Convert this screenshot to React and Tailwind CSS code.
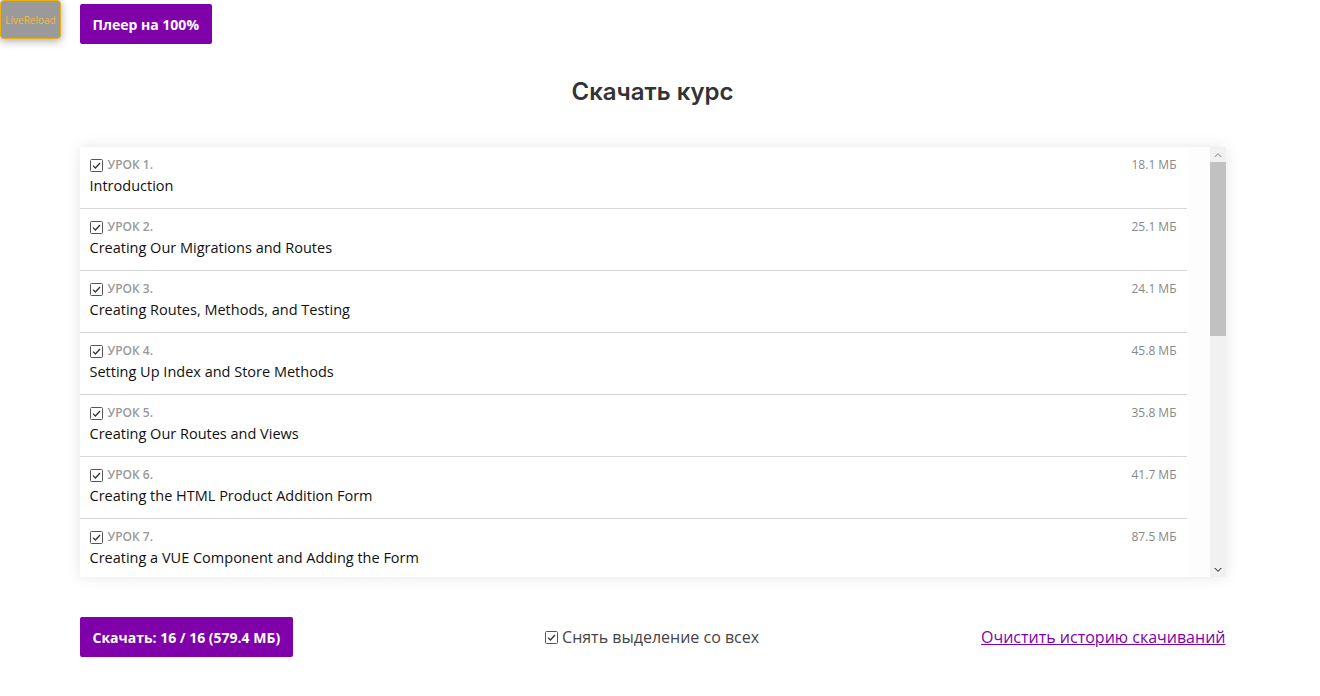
import React from "react";

const lessons = [
  ["Introduction", "18.1 МБ"],
  ["Creating Our Migrations and Routes", "25.1 МБ"],
  ["Creating Routes, Methods, and Testing", "24.1 МБ"],
  ["Setting Up Index and Store Methods", "45.8 МБ"],
  ["Creating Our Routes and Views", "35.8 МБ"],
  ["Creating the HTML Product Addition Form", "41.7 МБ"],
  ["Creating a VUE Component and Adding the Form", "87.5 МБ"],
];

function Check({ className = "" }) {
  return (
    <svg width="13" height="13" viewBox="0 0 13 13" className={className}>
      <rect x="0.5" y="0.5" width="12" height="12" rx="1" fill="white" stroke="#555" strokeWidth="1" />
      <path d="M3 6.6 L5.4 9 L10 4" fill="none" stroke="#333" strokeWidth="1.3" />
    </svg>
  );
}

export default function App() {
  return (
    <div className="relative w-[1320px] h-[696px] bg-white overflow-hidden" style={{ fontFamily: '"Open Sans", sans-serif' }}>
      <div className="absolute left-0 top-0 w-[61px] h-[39px] rounded-[4px] border border-[#e8b010] bg-[#9a9a9a] shadow-[0_2px_8px_rgba(0,0,0,0.35)] flex items-center justify-center pt-[1px] text-[10px] text-[#f5b840]">
        LiveReload
      </div>
      <div className="w-[1305px]">
        <div className="w-[1146px] mx-auto pt-[4px]">
          <button className="h-[40px] px-[13px] rounded-[2px] bg-[#8000aa] text-white text-[14px] font-bold">
            Плеер на 100%
          </button>
          <h1 className="mt-[30px] text-center text-[24px] leading-[36px] font-semibold text-[#333]" style={{ fontFamily: 'Inter, sans-serif' }}>
            Скачать курс
          </h1>
          <div className="mt-[37px] h-[430px] flex bg-[#fdfdfd] shadow-[0_0_14px_rgba(0,0,0,0.1)]">
            <div className="flex-1 overflow-hidden">
              <div className="w-[1107px]">
                {lessons.map(([title, size], i) => (
                  <div key={i} className="h-[62px] border-b border-[#d6d6d6] pl-[10px] pr-[10px] pt-[10px] flex justify-between bg-white">
                    <div>
                      <div className="flex items-center gap-[5px] h-[16px]">
                        <Check />
                        <span className="text-[12px] font-semibold text-[#999]">УРОК {i + 1}.</span>
                      </div>
                      <div className="mt-[2px] text-[14.5px] leading-[22px] text-[#111]">{title}</div>
                    </div>
                    <div className="text-[12px] leading-[16px] text-[#888]">{size}</div>
                  </div>
                ))}
              </div>
            </div>
            <div className="w-[16px] bg-[#f1f1f1] flex flex-col">
              <div className="h-[15px] flex items-center justify-center">
                <svg width="8" height="6" viewBox="0 0 8 6"><path d="M0 5 L4 1 L8 5 L6.5 5 L4 2.5 L1.5 5Z" fill="#a3a3a3" /></svg>
              </div>
              <div className="h-[174px] bg-[#c1c1c1]" />
              <div className="flex-1" />
              <div className="h-[15px] flex items-center justify-center">
                <svg width="8" height="6" viewBox="0 0 8 6"><path d="M0 1 L4 5 L8 1 L6.5 1 L4 3.5 L1.5 1Z" fill="#505050" /></svg>
              </div>
            </div>
          </div>
          <div className="mt-[40px] flex items-center justify-between">
            <button className="h-[40px] px-[13px] rounded-[2px] bg-[#8000aa] text-white text-[14px] font-bold">
              Скачать: 16 / 16 (579.4 МБ)
            </button>
            <label className="flex items-center gap-[4px] text-[16px] text-[#444] ml-[30px]">
              <Check />
              Снять выделение со всех
            </label>
            <a href="#" className="text-[16px] text-[#8000aa] underline">Очистить историю скачиваний</a>
          </div>
        </div>
      </div>
    </div>
  );
}
